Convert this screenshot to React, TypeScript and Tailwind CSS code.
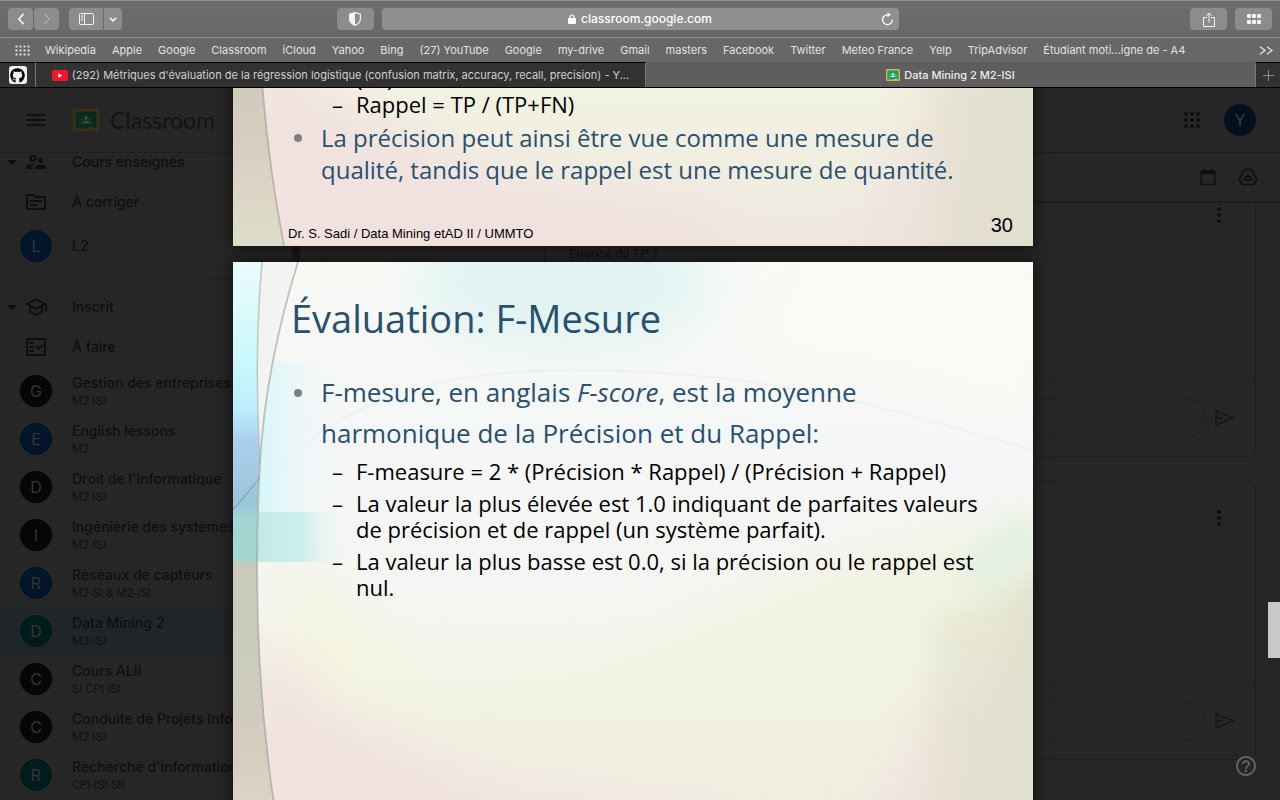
import { useId, type ReactNode } from "react";
import {
  MdMenu,
  MdOutlineSupervisorAccount,
  MdOutlineTopic,
  MdOutlineSchool,
  MdOutlineFactCheck,
  MdArrowDropDown,
  MdCalendarToday,
  MdMoreVert,
  MdHelpOutline,
} from "react-icons/md";
import { FaGithub } from "react-icons/fa";

const BOOKMARKS = [
  "Wikipedia",
  "Apple",
  "Google",
  "Classroom",
  "iCloud",
  "Yahoo",
  "Bing",
  "(27) YouTube",
  "Google",
  "my-drive",
  "Gmail",
  "masters",
  "Facebook",
  "Twitter",
  "Meteo France",
  "Yelp",
  "TripAdvisor",
  "Étudiant moti...igne de - A4",
];

type Course = { letter: string; name: string; section: string; color: string; active?: boolean };

const COURSES: Course[] = [
  { letter: "G", name: "Gestion des entreprises", section: "M2 ISI", color: "bg-[#060606]" },
  { letter: "E", name: "English lessons", section: "M2", color: "bg-[#03152a]" },
  { letter: "D", name: "Droit de l'Informatique", section: "M2 ISI", color: "bg-[#060606]" },
  { letter: "I", name: "Ingénierie des systèmes", section: "M2-ISI", color: "bg-[#060606]" },
  { letter: "R", name: "Réseaux de capteurs", section: "M2-SI & M2-ISI", color: "bg-[#03152a]" },
  { letter: "D", name: "Data Mining 2", section: "M2-ISI", color: "bg-[#001b1b]", active: true },
  { letter: "C", name: "Cours ALII", section: "SI CPI ISI", color: "bg-[#060606]" },
  { letter: "C", name: "Conduite de Projets Info", section: "M2 ISI", color: "bg-[#060606]" },
  { letter: "R", name: "Recherche d'information", section: "CPI-ISI-SII", color: "bg-[#001b1b]" },
];

const TOOL_BUTTON = "flex h-[22px] items-center justify-center bg-[#8b8c8b] text-[#f4f4f4]";

function ClassroomLogo({ className }: { className: string }) {
  return (
    <svg viewBox="0 0 26 22" className={className} aria-hidden="true">
      <rect width="26" height="22" rx="2" fill="#f0a93b" />
      <rect x="2.600" y="2.600" width="20.800" height="16.800" fill="#14a06a" />
      <circle cx="13" cy="9" r="1.900" fill="#fff" />
      <circle cx="8.800" cy="10.200" r="1.200" fill="#7fd0b0" />
      <circle cx="17.200" cy="10.200" r="1.200" fill="#7fd0b0" />
      <path d="M9 14.500c0-2 2-2.700 4-2.700s4 .700 4 2.700z" fill="#fff" />
      <path d="M6 14.500c0-1.400 1.200-2 2.600-2l-.6 2zM20 14.500c0-1.400-1.200-2-2.600-2l.6 2z" fill="#7fd0b0" />
      <rect x="15.500" y="18.200" width="5" height="1.400" fill="#fff" opacity=".8" />
    </svg>
  );
}

function Toolbar() {
  return (
    <div className="grid h-[38px] grid-cols-[1fr_minmax(0,517px)_1fr] items-center border-t border-b border-[#8d8e8d] bg-linear-to-b from-[#6c6d6c] to-[#676867] px-2">
      <div className="flex items-center">
        <button aria-label="Précédent" className={`${TOOL_BUTTON} w-[25px] rounded`}>
          <svg viewBox="0 0 8 14" className="h-3 w-2" fill="none" stroke="currentColor" strokeWidth="1.800">
            <path d="M7 1 1.500 7 7 13" />
          </svg>
        </button>
        <button aria-label="Suivant" className={`${TOOL_BUTTON} ml-px w-[25px] rounded`}>
          <svg viewBox="0 0 8 14" className="h-3 w-2" fill="none" stroke="#aaabaa" strokeWidth="1.500">
            <path d="m1 1 5.500 6L1 13" />
          </svg>
        </button>
        <button aria-label="Barre latérale" className={`${TOOL_BUTTON} ml-[10px] w-[34px] rounded-l`}>
          <svg viewBox="0 0 15 12" className="h-3 w-[15px]" fill="none" stroke="currentColor">
            <rect x=".5" y=".5" width="14" height="11" rx="1" />
            <path d="M5.500 .5v11M2 3h2M2 5h2M2 7h2" />
          </svg>
        </button>
        <button aria-label="Groupes d'onglets" className={`${TOOL_BUTTON} ml-px w-[18px] rounded-r`}>
          <svg viewBox="0 0 8 5" className="h-[5px] w-2" fill="none" stroke="currentColor" strokeWidth="1.600">
            <path d="m.8.700 3.200 3.200L7.200.700" />
          </svg>
        </button>
        <button aria-label="Rapport de confidentialité" className={`${TOOL_BUTTON} mr-2 ml-auto w-[37px] rounded`}>
          <svg viewBox="0 0 12 14" className="h-[14px] w-3">
            <path d="M6 .6 11.400 2.300v4.500c0 3-2.200 5.300-5.400 6.600C2.800 12.100.6 9.800.6 6.800V2.300z" fill="none" stroke="currentColor" strokeWidth="1.200" />
            <path d="M6 .6v12.800C2.800 12.100.6 9.800.6 6.800V2.300z" fill="currentColor" />
          </svg>
        </button>
      </div>
      <div className="flex h-[22px] items-center rounded bg-[#8f908f] pr-[5px] pl-[18px] text-white">
        <div className="flex flex-1 items-center justify-center gap-[5px]">
          <svg viewBox="0 0 8 10" className="h-[10px] w-2" aria-hidden="true">
            <rect y="4" width="8" height="6" rx=".8" fill="#fff" />
            <path d="M2 4.500V3a2 2 0 0 1 4 0v1.500" fill="none" stroke="#fff" strokeWidth="1.200" />
          </svg>
          <span className="text-xs leading-4 font-medium">classroom.google.com</span>
        </div>
        <button aria-label="Actualiser">
          <svg viewBox="0 0 13 14" className="h-[14px] w-[13px]" fill="none" stroke="currentColor" strokeWidth="1.300">
            <path d="M7.500 2.800H6.500a4.900 4.900 0 1 0 4.900 4.900" />
            <path d="M6.500.3 10 2.800 6.500 5.300z" fill="currentColor" stroke="none" />
          </svg>
        </button>
      </div>
      <div className="flex items-center justify-end gap-2">
        <button aria-label="Partager" className={`${TOOL_BUTTON} w-[37px] rounded`}>
          <svg viewBox="0 0 12 15" className="h-[15px] w-3" fill="none" stroke="currentColor">
            <path d="M4 5.500H.5v9h11v-9H8M6 10.500V1M3.300 3.700 6 1l2.700 2.700" />
          </svg>
        </button>
        <button aria-label="Vue d'ensemble" className={`${TOOL_BUTTON} w-[37px] rounded`}>
          <svg viewBox="0 0 14 10" className="h-[10px] w-[14px]" fill="currentColor">
            <rect width="4" height="4" rx="1" />
            <rect x="5" width="4" height="4" rx="1" />
            <rect x="10" width="4" height="4" rx="1" />
            <rect y="6" width="4" height="4" rx="1" />
            <rect x="5" y="6" width="4" height="4" rx="1" />
            <rect x="10" y="6" width="4" height="4" rx="1" />
          </svg>
        </button>
      </div>
    </div>
  );
}

function BookmarksBar() {
  return (
    <nav aria-label="Favoris" className="flex h-6 items-center bg-[#666766] pr-[7px] pl-[15px] text-[11px] text-[#e2e2e2]">
      <button aria-label="Afficher les favoris" className="mr-[15px]">
        <svg viewBox="0 0 15 11" className="h-[11px] w-[15px]" fill="currentColor">
          {[0, 4, 8].map((y) =>
            [0, 4, 8, 12].map((x) => <rect key={`${x}-${y}`} x={x + 0.5} y={y + 0.5} width="2" height="2" />),
          )}
        </svg>
      </button>
      <ul className="flex flex-1 gap-4 overflow-hidden whitespace-nowrap">
        {BOOKMARKS.map((label, i) => (
          <li key={i}>
            <a href="#">{label}</a>
          </li>
        ))}
      </ul>
      <button aria-label="Plus de favoris">
        <svg viewBox="0 0 14 9" className="h-[9px] w-[14px]" fill="none" stroke="currentColor" strokeWidth="1.300">
          <path d="m1 .7 5 3.800-5 3.800M8 .7l5 3.800-5 3.800" />
        </svg>
      </button>
    </nav>
  );
}

function TabBar() {
  return (
    <div className="flex h-[26px] border-b border-black bg-[#5d5e5d] text-[11px]">
      <button aria-label="GitHub" className="flex w-9 items-center justify-center border-t border-r border-t-black border-r-[#777] bg-[#323232]">
        <span className="flex size-[18px] items-center justify-center rounded-[3px] bg-[#efefef]">
          <FaGithub className="size-[15px] text-black" />
        </span>
      </button>
      <button className="flex min-w-0 flex-1 items-center justify-center gap-1 border-t border-r border-t-black border-r-[#777] bg-[#323232] text-[#cfcfcf]">
        <svg viewBox="0 0 16 11" className="h-[11px] w-4 shrink-0" aria-hidden="true">
          <rect width="16" height="11" rx="2.500" fill="#f8152b" />
          <path d="M6.300 3.200v4.600l4-2.300z" fill="#fff" />
        </svg>
        <span className="truncate">
          (292) Métriques d'évaluation de la régression logistique (confusion matrix, accuracy, recall, precision) - Y...
        </span>
      </button>
      <button className="flex min-w-0 flex-1 items-center justify-center gap-1 border-t border-transparent font-medium text-[#ececec]">
        <ClassroomLogo className="h-3 w-[14px] shrink-0" />
        <span className="truncate">Data Mining 2 M2-ISI</span>
      </button>
      <button aria-label="Nouvel onglet" className="flex w-[25px] items-center justify-center border-t border-l border-t-black border-l-[#777] bg-[#323232]">
        <svg viewBox="0 0 11 11" className="size-[11px]" stroke="#8a8a8a">
          <path d="M5.500 0v11M0 5.500h11" />
        </svg>
      </button>
    </div>
  );
}

function NavRow({ icon, label, expandable = false }: { icon: ReactNode; label: string; expandable?: boolean }) {
  return (
    <li>
      <a href="#" className="flex h-10 items-center text-sm font-medium">
        <span className="flex w-6 justify-center">{expandable && <MdArrowDropDown className="size-6" />}</span>
        <span className="mr-6 text-2xl">{icon}</span>
        {label}
      </a>
    </li>
  );
}

function CourseRow({ course }: { course: Course }) {
  return (
    <li>
      <a href="#" className={`flex h-12 items-center gap-5 pl-5 ${course.active ? "bg-[#202627]" : ""}`}>
        <span className={`flex size-8 shrink-0 items-center justify-center rounded-full text-base text-[#343434] ${course.color}`}>
          {course.letter}
        </span>
        <span className="flex min-w-0 flex-col whitespace-nowrap">
          <span className="truncate text-sm leading-5 font-medium">{course.name}</span>
          {course.section && <span className="font-[Roboto,sans-serif] text-xs leading-4 text-[#121212]">{course.section}</span>}
        </span>
      </a>
    </li>
  );
}

function Sidebar() {
  return (
    <aside className="w-[300px] shrink-0 overflow-hidden border-r-8 border-[#191919]">
      <ul className="-mt-[11px]">
        <NavRow expandable label="Cours enseignés" icon={<MdOutlineSupervisorAccount />} />
        <NavRow label="À corriger" icon={<MdOutlineTopic />} />
        <CourseRow course={{ letter: "L", name: "L2", section: "", color: "bg-[#03152a]" }} />
      </ul>
      <ul className="mt-2 border-t border-[#1f1f1f] pt-2">
        <NavRow expandable label="Inscrit" icon={<MdOutlineSchool />} />
        <NavRow label="À faire" icon={<MdOutlineFactCheck />} />
        {COURSES.map((course) => (
          <CourseRow key={course.name} course={course} />
        ))}
      </ul>
    </aside>
  );
}

function CommentBox({ label }: { label: string }) {
  return (
    <div className="flex items-center gap-2 border-t border-[#1f1f1f] py-[18px] pr-5 pl-5">
      <input aria-label={label} className="h-10 min-w-0 flex-1 rounded-full border border-[#1f1f1f] bg-transparent px-5" />
      <button aria-label="Publier">
        <svg viewBox="0 0 21 18" className="h-[18px] w-[21px]" fill="none" stroke="#191919" strokeWidth="1.800">
          <path d="M2 1.800 18.500 9 2 16.200zM2 9h7" />
        </svg>
      </button>
    </div>
  );
}

function Classroom() {
  return (
    <div className="flex h-full flex-col bg-[#262626] text-[#0f0f0f]">
      <header className="flex h-[65px] shrink-0 items-center border-b border-[#1f1f1f] px-6">
        <button aria-label="Menu principal">
          <MdMenu className="size-6" />
        </button>
        <ClassroomLogo className="ml-[25px] h-[22px] w-[26px] brightness-[0.27]" />
        <span className="ml-[11px] font-[Lato,sans-serif] text-[23px] leading-7 text-[#141414]">Classroom</span>
        <button aria-label="Applications Google" className="mr-6 ml-auto">
          <svg viewBox="0 0 16 16" className="size-4" fill="currentColor">
            {[2, 8, 14].map((y) => [2, 8, 14].map((x) => <circle key={`${x}-${y}`} cx={x} cy={y} r="2" />))}
          </svg>
        </button>
        <span className="flex size-8 items-center justify-center rounded-full bg-[#000f1c] text-base text-[#3a3f44]">Y</span>
      </header>
      <div className="flex min-h-0 flex-1">
        <Sidebar />
        <div className="flex min-w-0 flex-1 flex-col">
          <div className="flex h-12 shrink-0 items-center justify-end gap-[18px] pr-5 shadow-[0_1px_2px_#161616]">
            <button aria-label="Agenda" className="p-px">
              <MdCalendarToday className="size-[18px]" />
            </button>
            <button aria-label="Dossier Drive" className="p-0.5">
              <svg viewBox="0 0 20 18" className="h-[18px] w-5" fill="none" stroke="currentColor" strokeWidth="1.600" strokeLinejoin="round">
                <path d="M6.500 1.500h7L18.800 11.300 16 16.500H4L1.200 11.300z" />
                <path d="M10 6.500 6.600 12.200h6.800z" />
              </svg>
            </button>
          </div>
          <main className="flex min-h-0 flex-1 flex-col gap-6 overflow-hidden px-6 font-[Roboto,sans-serif] text-[13px]">
            <article className="rounded-b-lg border border-t-0 border-[#1f1f1f]">
              <div className="flex h-[178px] items-start pt-0.5 pr-6">
                <div className="ml-[219px] h-[72px] min-w-0 flex-1 border-l border-[#1a1a1a] pt-[41px] pl-6">Énoncé du TP 1</div>
                <button aria-label="Options de l'annonce">
                  <MdMoreVert className="size-6" />
                </button>
              </div>
              <CommentBox label="Ajouter un commentaire" />
            </article>
            <article className="rounded-lg border border-[#1f1f1f]">
              <div className="flex h-[200px] items-start justify-end pt-6 pr-6">
                <button aria-label="Options du devoir">
                  <MdMoreVert className="size-6" />
                </button>
              </div>
              <CommentBox label="Ajouter un commentaire au devoir" />
            </article>
          </main>
        </div>
      </div>
    </div>
  );
}

function SlideBackdrop() {
  const id = useId();
  const ref = (name: string) => `url(#${id}${name})`;
  return (
    <svg viewBox="0 0 800 600" preserveAspectRatio="none" className="absolute inset-0 size-full" aria-hidden="true">
      <defs>
        <linearGradient id={`${id}base`} x1="0" y1="0" x2="0" y2="1">
          <stop offset="0" stopColor="#f9faf6" />
          <stop offset=".3" stopColor="#f5f6f6" />
          <stop offset=".58" stopColor="#f5f5f2" />
          <stop offset=".72" stopColor="#f2f3e3" />
          <stop offset="1" stopColor="#efe9df" />
        </linearGradient>
        <linearGradient id={`${id}fade`} x1="0" y1="0" x2="1" y2="0">
          <stop offset="0" stopColor="#d6f6fa" />
          <stop offset="1" stopColor="#f2f8fa" stopOpacity="0" />
        </linearGradient>
        <linearGradient id={`${id}teal`} x1="0" y1="0" x2="1" y2="0">
          <stop offset="0" stopColor="#bfeae5" />
          <stop offset=".5" stopColor="#cdf0ed" />
          <stop offset="1" stopColor="#eef6f6" stopOpacity="0" />
        </linearGradient>
        <linearGradient id={`${id}sky`} x1="0" y1="0" x2="0" y2="1">
          <stop offset="0" stopColor="#eafcfd" />
          <stop offset=".35" stopColor="#c9f8fc" />
          <stop offset=".49" stopColor="#bdeefb" />
          <stop offset=".6" stopColor="#a9cfee" />
          <stop offset=".8" stopColor="#9cc5d8" />
          <stop offset=".86" stopColor="#a3d6d6" />
          <stop offset="1" stopColor="#a5d6cc" />
        </linearGradient>
        <linearGradient id={`${id}sand`} x1="0" y1="0" x2="0" y2="1">
          <stop offset="0" stopColor="#c8cabc" />
          <stop offset=".45" stopColor="#cdccbd" />
          <stop offset=".65" stopColor="#d8cdbf" />
          <stop offset="1" stopColor="#dedfcb" />
        </linearGradient>
        <linearGradient id={`${id}khaki`} x1="0" y1="0" x2="1" y2="0">
          <stop offset="0" stopColor="#e0e0cc" stopOpacity="0" />
          <stop offset="1" stopColor="#dfdfcb" />
        </linearGradient>
        <filter id={`${id}soft`} x="-30%" y="-30%" width="160%" height="160%">
          <feGaussianBlur stdDeviation="24" />
        </filter>
        <filter id={`${id}near`} x="-60%" y="-60%" width="220%" height="220%">
          <feGaussianBlur stdDeviation="14" />
        </filter>
      </defs>
      <rect width="800" height="600" fill={ref("base")} />
      <g filter={ref("soft")}>
        <ellipse cx="330" cy="20" rx="150" ry="70" fill="#e2f4f3" />
        <path d="M820 -20V170L640 120 500 100 560 -20z" fill="#fbfaf5" />
        <path d="M40 320 80 440 190 420 60 300z" fill="#f4f4e0" />
        <path d="M20 370 100 450 270 530 480 560 540 680H0z" fill="#f1e2df" />
        <path d="M690 440 600 680H840V380z" fill="#ecdfdc" opacity=".7" />
        <path d="M600 300 820 250V400L600 420 300 440z" fill="#f2f3e0" />
      </g>
      <path d="M780 330 700 640H840V300z" fill={ref("khaki")} filter={ref("near")} />
      <path d="M700 640V360L830 300V640z" fill="#dfdfcb" opacity=".55" filter={ref("near")} />
      <path d="M790 250 720 310 760 330 810 290z" fill="#dcf0e0" opacity=".8" filter={ref("near")} />
      <path d="M0 262C60 170 150 108 340 108S640 142 800 188" fill="none" stroke="#9fb8bd" strokeOpacity=".1" strokeWidth="1.500" />
      <rect x="24" y="100" width="90" height="150" fill={ref("fade")} />
      <rect x="24" y="250" width="90" height="50" fill={ref("teal")} />
      <path d="M0 0H29C22 80 24 150 27 200 24 240 24 270 24 300H0z" fill={ref("sky")} />
      <path d="M29 0H65C40 80 30 150 27 200 24 150 22 80 29 0z" fill="#f2f4f1" />
      <path d="M0 300H24C24 400 33 510 51 600H0z" fill={ref("sand")} />
      <path d="M0 248 27 216" stroke="#7b9bab" strokeOpacity=".6" strokeWidth="1.500" />
      <path d="M29 0C22 80 24 150 27 200" fill="none" stroke="#a9b5b5" strokeOpacity=".7" strokeWidth="1.500" />
      <path d="M65 0C40 80 30 150 27 200 22 290 20 440 51 600" fill="none" stroke="#a5a39a" strokeOpacity=".65" strokeWidth="1.800" />
    </svg>
  );
}

function Slide({ children }: { children: ReactNode }) {
  return (
    <section className="relative aspect-[4/3] w-full max-w-[800px] shrink-0 overflow-hidden shadow-[0_0_14px_#0c0c0c]">
      <SlideBackdrop />
      <div className="relative flex h-full flex-col">{children}</div>
    </section>
  );
}

function Bullet({ children, className }: { children: ReactNode; className: string }) {
  return (
    <li className={`flex text-[#28506f] ${className}`}>
      <span aria-hidden="true" className="flex h-[1lh] w-7 shrink-0 items-center pl-px">
        <span className="size-2 rounded-full bg-[#7f7f7f]" />
      </span>
      <div>{children}</div>
    </li>
  );
}

function Dash({ children }: { children: ReactNode }) {
  return (
    <li className="flex text-[22px] leading-[26px] text-black">
      <span aria-hidden="true" className="w-6 shrink-0">
        –
      </span>
      <div>{children}</div>
    </li>
  );
}

function Viewer() {
  return (
    <div role="dialog" aria-label="Aperçu du cours" className="absolute inset-0 overflow-hidden pr-[14px]">
      <div className="-mt-[442px] flex flex-col items-center gap-4 font-['Open_Sans',sans-serif]">
        <Slide>
          <ul className="mt-auto flex flex-col gap-[5px] pl-[60px]">
            <li>
              <ul className="pl-[39px]">
                <li className="pl-6 text-[22px] leading-[26px]">(FP)</li>
                <Dash>Rappel = TP / (TP+FN)</Dash>
              </ul>
            </li>
            <Bullet className="text-2xl leading-8">
              La précision peut ainsi être vue comme une mesure de
              <br />
              qualité, tandis que le rappel est une mesure de quantité.
            </Bullet>
          </ul>
          <footer className="mt-[29px] flex items-end justify-between pr-5 pb-1 pl-[55px] font-['Liberation_Sans',sans-serif] text-black">
            <span className="text-[13px] leading-4">Dr. S. Sadi / Data Mining etAD II / UMMTO</span>
            <span className="mb-[7px] text-xl leading-5">30</span>
          </footer>
        </Slide>
        <Slide>
          <h1 className="mt-8 ml-[58px] text-[38px] leading-12 text-[#28506f]">Évaluation: F-Mesure</h1>
          <ul className="mt-[30px] pl-[60px]">
            <Bullet className="text-[26px] leading-[41px]">
              F-mesure, en anglais <em>F-score</em>, est la moyenne
              <br />
              harmonique de la Précision et du Rappel:
            </Bullet>
            <li className="mt-1">
              <ul className="flex flex-col gap-1.5 pl-[39px]">
                <Dash>F-measure = 2 * (Précision * Rappel) / (Précision + Rappel)</Dash>
                <Dash>
                  La valeur la plus élevée est 1.0 indiquant de parfaites valeurs
                  <br />
                  de précision et de rappel (un système parfait).
                </Dash>
                <Dash>
                  La valeur la plus basse est 0.0, si la précision ou le rappel est
                  <br />
                  nul.
                </Dash>
              </ul>
            </li>
          </ul>
        </Slide>
      </div>
      <div className="absolute right-0 bottom-[142px] h-14 w-3 bg-[#c8c8c8]" />
      <button aria-label="Aide" className="absolute right-[22px] bottom-[22px] text-[#5f6368]">
        <MdHelpOutline className="size-6" />
      </button>
    </div>
  );
}

export default function App() {
  return (
    <div className="flex h-screen flex-col overflow-hidden bg-[#262626] font-[Inter,sans-serif]">
      <Toolbar />
      <BookmarksBar />
      <TabBar />
      <div className="relative min-h-0 flex-1">
        <Classroom />
        <Viewer />
      </div>
    </div>
  );
}
